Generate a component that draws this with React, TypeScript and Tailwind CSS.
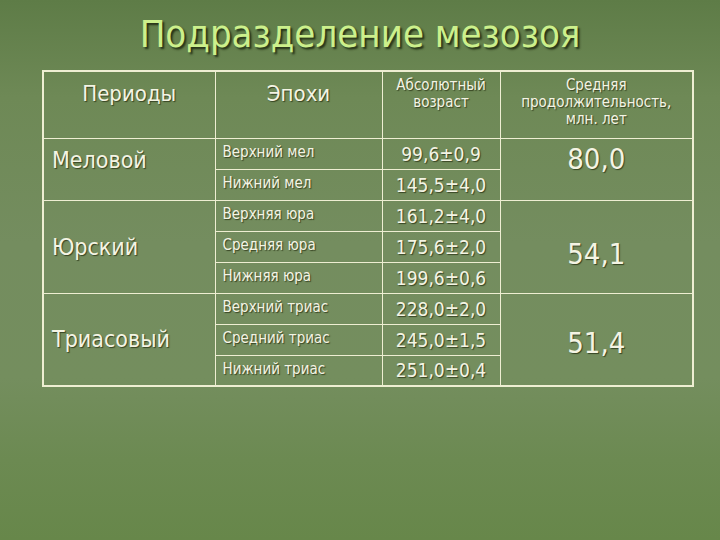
import React from "react";

const FONT = { fontFamily: '"DejaVu Sans Condensed", "DejaVu Sans", sans-serif' };

const epochs = [
  { name: "Верхний мел", age: "99,6±0,9" },
  { name: "Нижний мел", age: "145,5±4,0" },
  { name: "Верхняя юра", age: "161,2±4,0" },
  { name: "Средняя юра", age: "175,6±2,0" },
  { name: "Нижняя юра", age: "199,6±0,6" },
  { name: "Верхний триас", age: "228,0±2,0" },
  { name: "Средний триас", age: "245,0±1,5" },
  { name: "Нижний триас", age: "251,0±0,4" },
];

const shadow = "[text-shadow:1px_1px_1px_rgba(40,50,20,0.8)]";

export default function App() {
  const cell = "border border-[#eeeed2] p-0";
  return (
    <div
      className="w-[720px] h-[540px] overflow-hidden bg-[linear-gradient(180deg,#5e7c47_0%,#6e8956_18%,#748d5f_45%,#748e5e_70%,#6c8a52_85%,#67874a_100%)]"
      style={FONT}
    >
      <h1 className="h-[70px] pt-[12px] text-center text-[38px] leading-[44px] text-[#ccf08c] [text-shadow:2px_2px_2px_rgba(30,40,15,0.9)]">
        Подразделение мезозоя
      </h1>
      <div className="pl-[42px]">
        <table className="w-[650px] border-collapse border-2 border-[#eeeed2] text-[#f4f4e4] table-fixed">
          <colgroup>
            <col className="w-[172px]" />
            <col className="w-[167px]" />
            <col className="w-[118px]" />
            <col className="w-[193px]" />
          </colgroup>
          <thead>
            <tr className="h-[67px]">
              <th className={`${cell} align-top font-normal text-[22px] leading-[26px] pt-[9px] ${shadow}`}>Периоды</th>
              <th className={`${cell} align-top font-normal text-[22px] leading-[26px] pt-[9px] ${shadow}`}>Эпохи</th>
              <th className={`${cell} align-top font-normal text-[15px] leading-[17px] pt-[5px] ${shadow}`}>
                Абсолютный
                <br />
                возраст
              </th>
              <th className={`${cell} align-top font-normal text-[15px] leading-[17px] pt-[5px] ${shadow}`}>
                Средняя
                <br />
                продолжительность,
                <br />
                млн. лет
              </th>
            </tr>
          </thead>
          <tbody>
            {epochs.map((e, i) => (
              <tr key={e.name} className="h-[31px]">
                {i === 0 && (
                  <td rowSpan={2} className={`${cell} align-top pl-[8px] pt-[8px] text-[23px] leading-[26px] ${shadow}`}>
                    Меловой
                  </td>
                )}
                {i === 2 && (
                  <td rowSpan={3} className={`${cell} align-middle pl-[8px] text-[23px] leading-[26px] ${shadow}`}>
                    Юрский
                  </td>
                )}
                {i === 5 && (
                  <td rowSpan={3} className={`${cell} align-middle pl-[8px] text-[23px] leading-[26px] ${shadow}`}>
                    Триасовый
                  </td>
                )}
                <td className={`${cell} pl-[7px] pb-[3px] text-[15px] leading-[18px] ${shadow}`}>{e.name}</td>
                <td className={`${cell} text-center text-[19px] leading-[22px] ${shadow}`}>{e.age}</td>
                {i === 0 && (
                  <td rowSpan={2} className={`${cell} align-top text-center pt-[3px] text-[29px] leading-[34px] ${shadow}`}>
                    80,0
                  </td>
                )}
                {i === 2 && (
                  <td rowSpan={3} className={`${cell} align-middle text-center pt-[14px] text-[29px] leading-[34px] ${shadow}`}>
                    54,1
                  </td>
                )}
                {i === 5 && (
                  <td rowSpan={3} className={`${cell} align-middle text-center pt-[8px] text-[29px] leading-[34px] ${shadow}`}>
                    51,4
                  </td>
                )}
              </tr>
            ))}
          </tbody>
        </table>
      </div>
    </div>
  );
}
